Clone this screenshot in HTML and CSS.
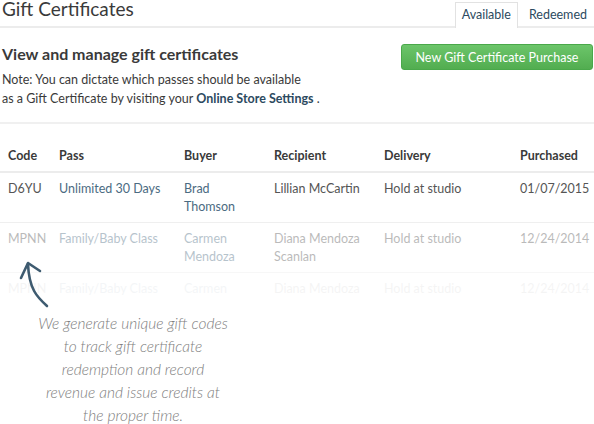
FILE: index.html
```html
<!DOCTYPE html>
<html>
<head>
<meta charset="utf-8">
<link rel="stylesheet" href="styles.css">
</head>
<body>
<div class="page">
  <div class="topbar">
    <h1 class="title">Gift Certificates</h1>
    <div class="tabs">
      <span class="tab active">Available</span>
      <span class="tab">Redeemed</span>
    </div>
  </div>
  <div class="intro">
    <div class="intro-text">
      <h2 class="subtitle">View and manage gift certificates</h2>
      <p class="note">Note: You can dictate which passes should be available<br>as a Gift Certificate by visiting your <a class="strong-link">Online Store Settings</a> .</p>
    </div>
    <button class="btn-green">New Gift Certificate Purchase</button>
  </div>
  <table class="grid">
    <colgroup>
      <col class="w-code"><col class="w-pass"><col class="w-buyer"><col class="w-rec"><col class="w-del"><col class="w-pur">
    </colgroup>
    <thead>
      <tr>
        <th>Code</th>
        <th>Pass</th>
        <th>Buyer</th>
        <th>Recipient</th>
        <th>Delivery</th>
        <th>Purchased</th>
      </tr>
    </thead>
    <tbody>
      <tr class="r1">
        <td>D6YU</td>
        <td class="link">Unlimited 30 Days</td>
        <td class="link">Brad<br>Thomson</td>
        <td>Lillian McCartin</td>
        <td>Hold at studio</td>
        <td>01/07/2015</td>
      </tr>
      <tr class="r2">
        <td>MPNN</td>
        <td class="link">Family/Baby Class</td>
        <td class="link">Carmen<br>Mendoza</td>
        <td>Diana Mendoza<br>Scanlan</td>
        <td>Hold at studio</td>
        <td>12/24/2014</td>
      </tr>
      <tr class="r3">
        <td>MPNN</td>
        <td class="link">Family/Baby Class</td>
        <td class="link">Carmen</td>
        <td>Diana Mendoza</td>
        <td>Hold at studio</td>
        <td>12/24/2014</td>
      </tr>
    </tbody>
  </table>
  <p class="caption">We generate unique gift codes<br>to track gift certificate<br>redemption and record<br>revenue and issue credits at<br>the proper time.</p>
  <svg class="arrow" width="40" height="60" viewBox="0 0 40 60">
    <path d="M34 51 C24 42 16 34 15 9" fill="none" stroke="#3e5b70" stroke-width="2.6" stroke-linecap="round"/>
    <path d="M8 23 L15 8 L27 16" fill="none" stroke="#3e5b70" stroke-width="2.6" stroke-linecap="round" stroke-linejoin="round"/>
  </svg>
</div>
</body>
</html>
```
FILE: styles.css
```css
html, body { margin: 0; padding: 0; background: #fff; }
body { font-family: Lato, "Open Sans", sans-serif; color: #3a3a3a; }
.page { position: relative; width: 594px; height: 424px; overflow: hidden; }
.topbar { display: flex; justify-content: space-between; align-items: flex-end; border-bottom: 2px solid #ececec; height: 26px; }
.title { margin: 0 0 0 2px; font-size: 19px; font-weight: 400; line-height: 18px; align-self: flex-start; color: #3a3a3a; }
.tabs { display: flex; gap: 4px; margin-bottom: -2px; }
.tab { font-size: 12.5px; color: #2c4a60; padding: 0 6px; height: 24px; line-height: 24px; border: 1px solid transparent; border-bottom: none; }
.tab.active { border-color: #e2e2e2; background: #fff; height: 25px; }
.intro { display: flex; justify-content: space-between; align-items: flex-start; padding: 17px 1px 0 2px; height: 77px; border-bottom: 2px solid #f0f0f0; }
.subtitle { margin: 0; font-size: 16px; font-weight: 700; color: #3a3a3a; line-height: 18px; }
.note { margin: 7px 0 0 0; font-size: 12.5px; line-height: 19px; color: #3a3a3a; }
.strong-link { font-weight: 700; color: #2c4a60; }
.btn-green { margin-top: -1px; width: 192px; height: 26px; border: 1px solid #4aa84a; border-radius: 3px; background: linear-gradient(#6cc56a, #52ad50); color: #fff; font-family: Lato, sans-serif; font-size: 12.5px; padding: 0; }
.grid { width: 594px; table-layout: fixed; border-collapse: collapse; margin-top: 21px; font-size: 12.5px; }
.w-code { width: 51px; }
.w-pass { width: 125px; }
.w-buyer { width: 90px; }
.w-rec { width: 110px; }
.w-del { width: 136px; }
.w-pur { width: 82px; }
.grid th { text-align: left; font-weight: 700; color: #3a3a3a; padding: 0 0 8px 8px; height: 18px; border-bottom: 2px solid #ececec; vertical-align: bottom; white-space: nowrap; }
.grid td { text-align: left; vertical-align: top; padding: 7px 0 6px 8px; line-height: 18px; height: 36px; color: #555; border-bottom: 1px solid #efefef; white-space: nowrap; }
.grid td.link { color: #4b6b82; }
.r2 { opacity: 0.4; }
.r2 td { border-bottom-color: #f7f7f7; }
.r3 td { height: 18px; border-bottom: none; }
.r3 { opacity: 0.06; }
.caption { margin: 0; position: relative; top: 8px; width: 266px; text-align: center; font-style: italic; font-weight: 300; color: #808080; font-size: 15.5px; line-height: 23px; }
.arrow { position: absolute; left: 13px; top: 255px; }
```
